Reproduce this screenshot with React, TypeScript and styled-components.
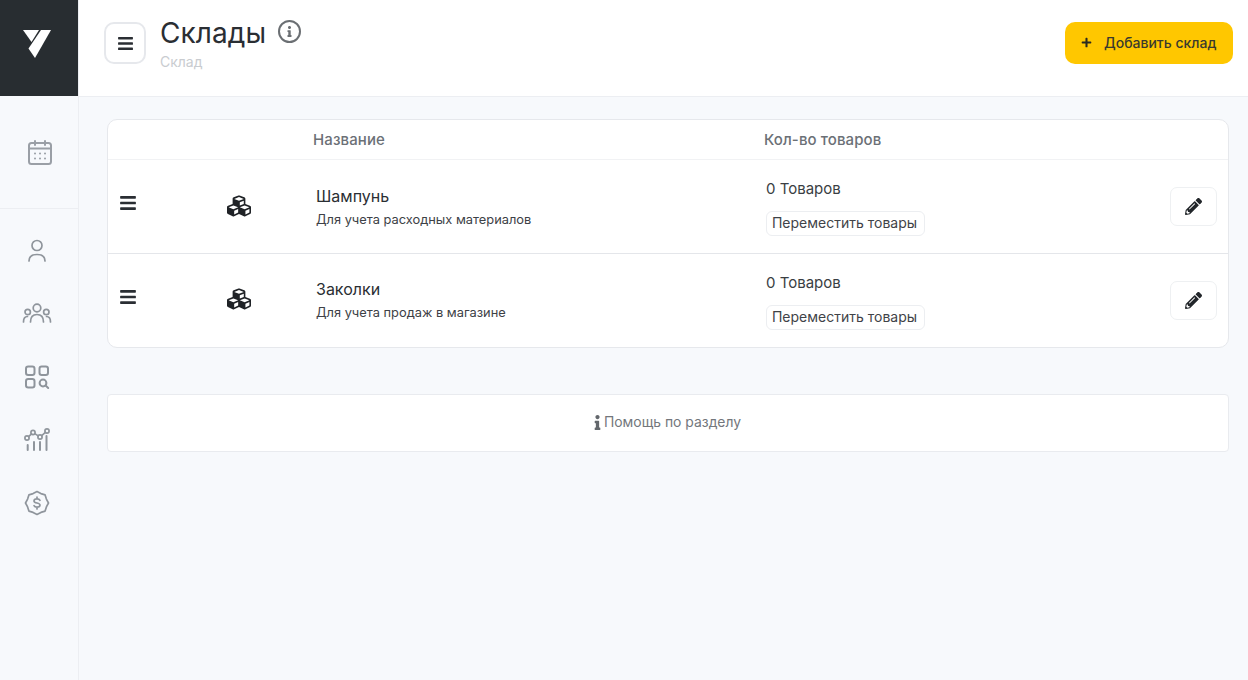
import React from "react";
import styled, { createGlobalStyle } from "styled-components";
import { FaBars, FaCubes, FaPencilAlt, FaInfo, FaPlus } from "react-icons/fa";

const Global = createGlobalStyle`
  html, body { margin: 0; padding: 0; height: 100%; }
  body { background: #f7f9fc; font-family: Inter, "Noto Sans", "Liberation Sans", sans-serif; color: #2a2e33; }
  * { box-sizing: border-box; }
`;

const Shell = styled.div`
  display: flex;
  width: 1248px;
  height: 680px;
  overflow: hidden;
`;
const Sidebar = styled.aside`
  width: 79px;
  flex: none;
  display: flex;
  flex-direction: column;
  border-right: 1px solid #eceef2;
  background: #f7f9fc;
`;
const LogoBox = styled.div`
  height: 96px;
  width: 78px;
  background: #282d31;
  display: flex;
  align-items: center;
  justify-content: center;
  padding-right: 4px;
  padding-bottom: 8px;
`;
const TopNav = styled.div`
  height: 113px;
  display: flex;
  align-items: center;
  justify-content: center;
  padding-top: 1px;
  border-bottom: 1px solid #eceef2;
  padding-left: 1px;
`;
const NavList = styled.nav`
  display: flex;
  flex-direction: column;
  align-items: center;
  padding-top: 27px;
  padding-right: 4px;
  gap: 33px;
`;
const NavIcon = styled.svg`
  width: 30px;
  height: 30px;
  fill: none;
  stroke: #8f959c;
  stroke-width: 1.7;
  stroke-linecap: round;
  stroke-linejoin: round;
  display: block;
`;
const Main = styled.main`
  flex: 1;
  min-width: 0;
  display: flex;
  flex-direction: column;
`;
const Header = styled.header`
  height: 97px;
  flex: none;
  background: #fff;
  border-bottom: 1px solid #eceef2;
  display: flex;
  align-items: flex-start;
  padding: 22px 15px 0 25px;
`;
const MenuButton = styled.button`
  width: 42px;
  height: 42px;
  border: 2px solid #e6e8ec;
  border-radius: 10px;
  background: #fff;
  color: #2a2e33;
  display: flex;
  align-items: center;
  justify-content: center;
  padding: 0;
  font-size: 17px;
`;
const TitleBlock = styled.div`
  margin-left: 14px;
  margin-top: -7px;
  flex: 1;
`;
const TitleRow = styled.div`
  display: flex;
  align-items: flex-start;
  gap: 12px;
`;
const Title = styled.h1`
  margin: 0;
  font-size: 28px;
  line-height: 36px;
  font-weight: 400;
  letter-spacing: 0.1px;
  color: #2a2e33;
`;
const InfoBadge = styled.span`
  width: 23px;
  height: 23px;
  margin-top: 5px;
  border: 2px solid #6b6f73;
  border-radius: 50%;
  color: #6b6f73;
  display: flex;
  align-items: center;
  justify-content: center;
  font-size: 11px;
`;
const Subtitle = styled.div`
  font-size: 14px;
  line-height: 18px;
  margin-top: 2px;
  color: #c9ccd0;
`;
const AddButton = styled.button`
  width: 168px;
  height: 42px;
  border: none;
  border-radius: 10px;
  background: #ffc700;
  color: #3a3a2e;
  font: 500 14px Inter, sans-serif;
  display: flex;
  align-items: center;
  padding: 0 0 2px 16px;
  gap: 12px;
  svg { color: #2a2a20; font-size: 11px; }
`;
const Content = styled.div`
  padding: 22px 19px 0 28px;
  display: flex;
  flex-direction: column;
  gap: 46px;
`;
const Card = styled.section`
  background: #fff;
  border: 1px solid #e6e8ec;
  border-radius: 10px;
  overflow: hidden;
`;
const HeadRow = styled.div`
  display: grid;
  grid-template-columns: 205px 451px 1fr;
  height: 40px;
  align-items: center;
  border-bottom: 1px solid #f1f2f4;
  font-size: 15px;
  font-weight: 500;
  letter-spacing: 0.1px;
  color: #6b7076;
`;
const HeadCell = styled.div<{ $col: number }>`
  grid-column: ${(p) => p.$col};
`;
const Drag = styled.div`
  padding: 34px 0 0 11px;
  font-size: 18px;
  line-height: 0;
  color: #2a2e33;
`;
const Cube = styled.div`
  padding-top: 34px;
  padding-left: 31px;
  font-size: 24px;
  line-height: 0;
  color: #1f2226;
`;
const NameCell = styled.div`
  padding-top: 26px;
`;
const Row = styled.div`
  display: grid;
  grid-template-columns: 88px 120px 450px 1fr 58px;
  height: 93px;
  align-items: start;
  & + & {
    border-top: 1px solid #e4e6ea;
    height: 94px;
    ${Cube} { padding-top: 33px; }
    ${NameCell} { padding-top: 25px; }
  }
`;
const Name = styled.div`
  font-size: 16px;
  line-height: 20px;
  color: #2a2e33;
`;
const Desc = styled.div`
  font-size: 12.85px;
  line-height: 16px;
  margin-top: 6px;
  color: #3d4146;
`;
const CountCell = styled.div`
  padding-top: 19px;
`;
const Count = styled.div`
  font-size: 15px;
  line-height: 20px;
  color: #3a3e43;
`;
const MoveButton = styled.button`
  display: block;
  margin-top: 12px;
  height: 25px;
  width: 159px;
  padding: 0 2px 2px 0;
  background: #fff;
  border: 1px solid #eceef1;
  border-radius: 6px;
  font: 400 14px Inter, sans-serif;
  color: #3f4348;
`;
const EditCell = styled.div`
  padding-top: 27px;
`;
const EditButton = styled.button`
  width: 47px;
  height: 39px;
  background: #fff;
  border: 1px solid #eef0f2;
  border-radius: 7px;
  display: flex;
  align-items: center;
  justify-content: center;
  padding: 0;
  font-size: 17px;
  color: #22262a;
`;
const HelpCard = styled.div`
  height: 58px;
  background: #fff;
  border: 1px solid #e9ebef;
  border-radius: 4px;
  display: flex;
  align-items: center;
  justify-content: center;
  font-size: 13.9px;
  color: #73777c;
  padding: 0 5px 2px 0;
  svg { font-size: 15px; color: #63676c; margin-right: -1px; }
`;

const Logo = () => (
  <svg width="28" height="28" viewBox="0 0 28 28" aria-hidden="true">
    <path fill="#fff" d="M0 0 H16 L8.500 12 Z" />
    <path fill="#fff" d="M18 0 H28 L12 28 L5.500 18.500 Z" />
  </svg>
);

const CalendarIcon = () => (
  <NavIcon viewBox="0 0 30 30" style={{ stroke: "#9a9fa6", strokeWidth: 2 }}>
    <rect x="4" y="5" width="22" height="21" rx="2.500" />
    <path d="M4 10.500h22M10 3v4M20 3v4" />
    <path d="M10 15.500h.01M15 15.500h.01M20 15.500h.01M10 20.500h.01M15 20.500h.01M20 20.500h.01" />
  </NavIcon>
);
const UserIcon = () => (
  <NavIcon viewBox="0 0 30 30">
    <circle cx="15" cy="9.500" r="5" />
    <path d="M7 25c0-4.500 3.500-6.500 8-6.500s8 2 8 6.500" />
  </NavIcon>
);
const TeamIcon = () => (
  <NavIcon viewBox="0 0 30 30">
    <circle cx="15" cy="9" r="3.800" />
    <circle cx="5.700" cy="13" r="2.700" />
    <circle cx="24.300" cy="13" r="2.700" />
    <path d="M8.500 23c0-5 2.500-7.500 6.500-7.500s6.500 2.500 6.500 7.500" />
    <path d="M1.500 23c0-3 1.300-5.500 4-5.500M28.500 23c0-3-1.300-5.500-4-5.500" />
  </NavIcon>
);
const AppsIcon = () => (
  <NavIcon viewBox="0 0 30 30" style={{ strokeWidth: 2 }}>
    <rect x="4" y="4.500" width="8.500" height="8.500" rx="2.200" />
    <rect x="17.500" y="4.500" width="8.500" height="8.500" rx="2.200" />
    <rect x="4" y="17" width="8.500" height="8.500" rx="2.200" />
    <circle cx="21" cy="21" r="3.400" />
    <path d="M23.600 23.600l2.600 2.400" />
  </NavIcon>
);
const ChartIcon = () => (
  <NavIcon viewBox="0 0 30 30">
    <circle cx="5" cy="13" r="2.100" />
    <circle cx="11" cy="7.500" r="2.100" />
    <circle cx="18" cy="12" r="2.100" />
    <circle cx="25" cy="6" r="2.100" />
    <path d="M6.600 11.600l2.900-2.700M12.800 8.600l3.400 2.300M19.700 10.600l3.700-3.200" />
    <path d="M5.700 20v5M12 17v8M18 17v8M24.500 11v14" strokeWidth="2" />
  </NavIcon>
);
const BadgeIcon = () => (
  <NavIcon viewBox="0 0 30 30">
    <path d="M26.500 15L24.400 18.900 23.100 23.100 18.900 24.400 15 26.500 11.100 24.400 6.900 23.100 5.600 18.900 3.500 15 5.600 11.100 6.900 6.900 11.100 5.600 15 3.500 18.900 5.600 23.100 6.900 24.400 11.100Z" />
    <path d="M18 12.300c-.5-1-1.600-1.500-3-1.500-1.700 0-3 .8-3 2.100 0 2.800 6 1.400 6 4.200 0 1.300-1.300 2.100-3 2.100-1.400 0-2.500-.5-3-1.500M15 9v1.800M15 19.200V21" />
  </NavIcon>
);

const rows = [
  { name: "Шампунь", desc: "Для учета расходных материалов" },
  { name: "Заколки", desc: "Для учета продаж в магазине" },
];

export default function App() {
  return (
    <Shell>
      <Global />
      <Sidebar>
        <LogoBox><Logo /></LogoBox>
        <TopNav><CalendarIcon /></TopNav>
        <NavList>
          <UserIcon />
          <TeamIcon />
          <AppsIcon />
          <ChartIcon />
          <BadgeIcon />
        </NavList>
      </Sidebar>
      <Main>
        <Header>
          <MenuButton><FaBars /></MenuButton>
          <TitleBlock>
            <TitleRow>
              <Title>Склады</Title>
              <InfoBadge><FaInfo /></InfoBadge>
            </TitleRow>
            <Subtitle>Склад</Subtitle>
          </TitleBlock>
          <AddButton><FaPlus />Добавить склад</AddButton>
        </Header>
        <Content>
          <Card>
            <HeadRow>
              <HeadCell $col={2}>Название</HeadCell>
              <HeadCell $col={3}>Кол-во товаров</HeadCell>
            </HeadRow>
            {rows.map((r) => (
              <Row key={r.name}>
                <Drag><FaBars /></Drag>
                <Cube><FaCubes /></Cube>
                <NameCell>
                  <Name>{r.name}</Name>
                  <Desc>{r.desc}</Desc>
                </NameCell>
                <CountCell>
                  <Count>0 Товаров</Count>
                  <MoveButton>Переместить товары</MoveButton>
                </CountCell>
                <EditCell>
                  <EditButton><FaPencilAlt /></EditButton>
                </EditCell>
              </Row>
            ))}
          </Card>
          <HelpCard><FaInfo />Помощь по разделу</HelpCard>
        </Content>
      </Main>
    </Shell>
  );
}
